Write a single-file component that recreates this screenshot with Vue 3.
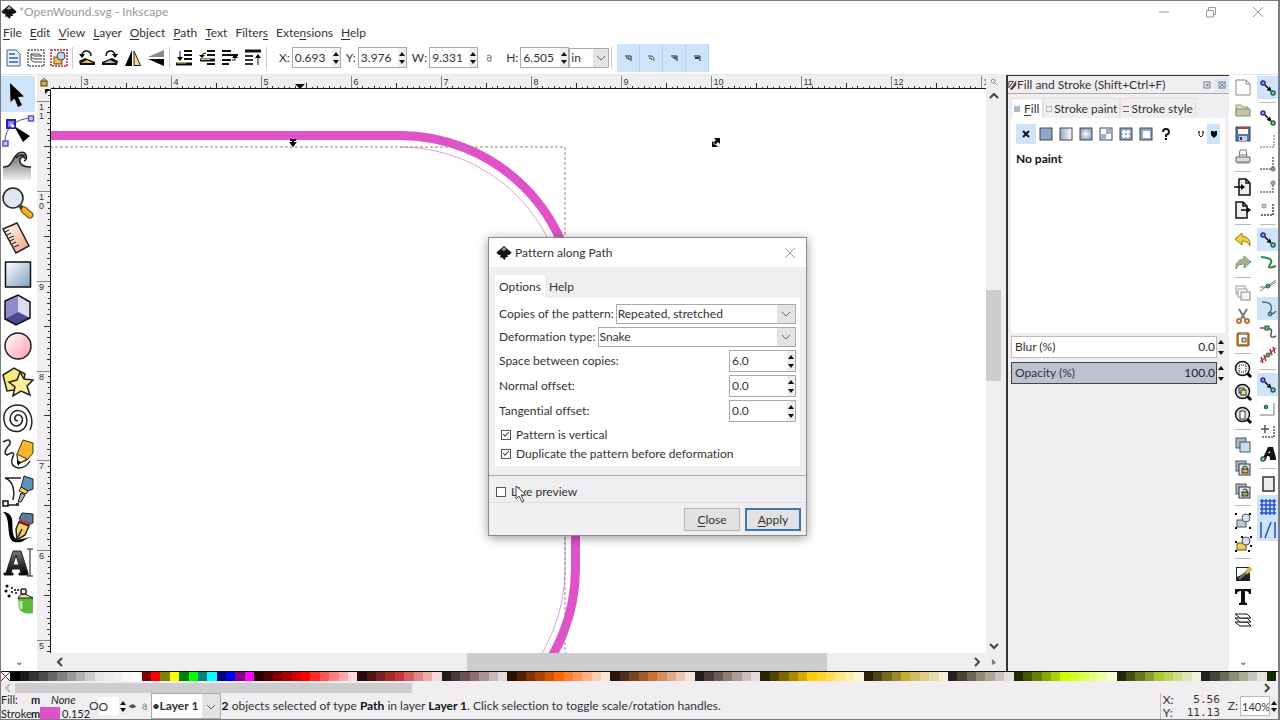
<template>
  <div class="window">
    <svg class="defs" width="0" height="0" aria-hidden="true">
      <defs>
        <linearGradient id="gBlue" x1="0" y1="0" x2="1" y2="1"><stop offset="0" stop-color="#fff" /><stop offset="1" stop-color="#7f9fc6" /></linearGradient>
        <linearGradient id="gPink" x1="0" y1="0" x2="1" y2="1"><stop offset="0" stop-color="#fff" /><stop offset="1" stop-color="#ff9cab" /></linearGradient>
        <linearGradient id="gRuler" x1="0" y1="0" x2="1" y2="1"><stop offset="0" stop-color="#fff" /><stop offset="1" stop-color="#f0a080" /></linearGradient>
        <linearGradient id="gWave" x1="0" y1="0" x2="0" y2="1"><stop offset="0" stop-color="#666" /><stop offset="1" stop-color="#eee" /></linearGradient>
        <linearGradient id="gFade"><stop offset="0" stop-color="#8fa6c6" /><stop offset="1" stop-color="#fff" /></linearGradient>
        <radialGradient id="gRadial"><stop offset="0" stop-color="#fff" /><stop offset="1" stop-color="#8fa6c6" /></radialGradient>
        <linearGradient id="gInk" x1="0" y1="0" x2="0" y2="1"><stop offset="0" stop-color="#777" /><stop offset="1" stop-color="#000" /></linearGradient>
      </defs>
      <symbol id="logo" viewBox="0 0 16 16">
        <path d="M8 1 L15 7 Q16 8 14.500 9 L11 10.500 L12.500 12 L10 12 L8.500 15 L6 12.500 L3.500 12.500 L5 10.800 L1.500 9 Q0 8 1 7 Z" fill="#111" />
        <path d="M8 2 L11 5 L9 4.800 L8 6 L6.500 5 L5 5.500 Z" fill="#aaa" />
      </symbol>

      <!-- toolbox -->
      <symbol id="t-select" viewBox="0 0 34 34"><path d="M9 6 L23 19.500 L17 20 L21 28 L17 30 L13.500 21.500 L9.500 25 Z" /></symbol>
      <symbol id="t-node" viewBox="0 0 34 34">
        <path d="M4 30 Q4 7 30 5" fill="none" stroke="#555" />
        <path d="M13 13 L29 23 L22 29 Z" />
        <rect x="6" y="7" width="8" height="8" fill="#7f7fee" stroke="#2222b5" stroke-width="2" />
        <path d="M9 10 L14 13 L11 15 Z" fill="#fff" />
        <rect x="27.500" y="3" width="5" height="5" fill="#c6c6ff" stroke="#5b55c8" stroke-width="1.500" />
        <rect x="2" y="28" width="5" height="5" fill="#c6c6ff" stroke="#5b55c8" stroke-width="1.500" />
      </symbol>
      <symbol id="t-tweak" viewBox="0 0 34 34">
        <path d="M2 18 C12 19 11 7 18 5 C25 2 29 10 24 13 C25 8 19 8 19 12 C18 17 25 18 30 18 V31 H2 Z" fill="url(#gWave)" />
        <path d="M2 18 C12 19 11 7 18 5 C25 2 29 10 24 13 C25 8 19 8 19 12 C18 17 25 18 30 18 L30 15 Q27 15 26 12 V3 H11 V12 L2 15 Z" fill="#fff" />
        <path d="M2 18 C12 19 11 7 18 4 C25 1 28 10 23 12 M24 9 C22 6 18 9 19 13 C20 17 25 18 30 18 M15 9 C18 5 22 6 23 7" fill="none" stroke="#222" stroke-width="1.500" />
      </symbol>
      <symbol id="t-zoom" viewBox="0 0 34 34">
        <path d="M19 21 L23 25" stroke="#444" stroke-width="4" />
        <path d="M23 25 L29 30" stroke="#6b4400" stroke-width="7" stroke-linecap="round" />
        <path d="M23 25 L29 30" stroke="#f4b022" stroke-width="5" stroke-linecap="round" />
        <circle cx="12" cy="13" r="10" fill="#dfe6f4" stroke="#222" stroke-width="1.500" />
      </symbol>
      <symbol id="t-measure" viewBox="0 0 34 34">
        <path d="M2 8 L16 2 L28 25 L15 32 Z" fill="url(#gRuler)" stroke="#222" stroke-width="1.500" />
        <path d="M4 11 L8 9 M6 14 L10 12 M8 17 L13 15 M9 20 L13 18 M11 23 L15 21 M13 26 L18 24" stroke="#111" />
      </symbol>
      <symbol id="t-rect" viewBox="0 0 34 34"><rect x="4.500" y="5" width="25" height="25" fill="url(#gBlue)" stroke="#111" stroke-width="1.500" /></symbol>
      <symbol id="t-box" viewBox="0 0 34 34">
        <path d="M4 8 L17 2 L29 9 V25 L15 32 L4 26 Z" fill="#a8a8dc" />
        <path d="M4 8 L17 2 V19 L4 26 Z" fill="#8d8dcc" />
        <path d="M17 2 L29 9 V25 L17 19 Z" fill="#dcdcf4" />
        <path d="M4 26 L17 19 L29 25 L15 32 Z" fill="#4a4a98" />
        <path d="M4 8 L17 2 L29 9 V25 L15 32 L4 26 Z" fill="none" stroke="#111" stroke-width="1.500" />
      </symbol>
      <symbol id="t-circle" viewBox="0 0 34 34"><circle cx="17" cy="17" r="13" fill="url(#gPink)" stroke="#222" stroke-width="1.500" /></symbol>
      <symbol id="t-star" viewBox="0 0 34 34">
        <path d="M2 10 L13 3 L24 9 L21 24 L6 26 Z" fill="#f8ea7b" stroke="#222" stroke-width="1.500" />
        <path d="M19 7 L23 14 L32 15 L26 21 L29 30 L20 26 L12 31 L14 22 L8 17 L16 15 Z" fill="#fff19a" stroke="#222" stroke-width="1.500" />
      </symbol>
      <symbol id="t-spiral" viewBox="0 0 34 34">
        <path d="M29 29 C34 18 28 4 17 4 C7 4 2 11 3 19 C4 28 12 32 19 30 C26 27 27 20 25 15 C22 8 13 8 10 14 C7 21 12 25 16 25 C21 24 23 18 20 15 C17 12 13 15 14 19 L17 20" fill="none" stroke="#222" stroke-width="1.500" />
      </symbol>
      <symbol id="t-pencil" viewBox="0 0 34 34">
        <path d="M2 5 Q10 0 9 7 Q1 16 6 18 Q16 12 11 22 Q9 29 17 31 Q25 31 29 24" fill="none" stroke="#222" stroke-width="1.500" />
        <path d="M22 3 L32 6 V16 L26 23 L17 27 L16 17 Z" fill="#f8b52f" stroke="#4b2c00" />
        <path d="M16 17 L26 22 L17 27 Z" fill="#fff1bd" stroke="#333" />
        <path d="M16 23 L20 25 L17 29 Z" />
      </symbol>
      <symbol id="t-pen" viewBox="0 0 34 34">
        <path d="M4 5 H20 M4 5 C13 8 14 20 12 27 M5 32 H18" fill="none" stroke="#222" stroke-width="1.500" />
        <path d="M23 3 L32 6 V16 L27 18 L20 14 Z" fill="#5b93bd" stroke="#222" />
        <path d="M20 14 L27 18 L25 21 L18 18 Z" fill="#f2d54b" stroke="#222" />
        <path d="M20 20 L24 22 L20 29 H17 Z" fill="#9bb" stroke="#111" />
        <rect x="2" y="28" width="5" height="5" fill="#eee" stroke="#111" stroke-width="1.500" />
        <rect x="15" y="30" width="3" height="3" fill="#333" />
      </symbol>
      <symbol id="t-calligraphy" viewBox="0 0 34 34">
        <path d="M2 3 C17 4 8 20 14 29 C19 33 25 27 32 29 C24 27 24 35 13 33 C4 29 11 10 2 3 Z" />
        <path d="M21 4 L32 5 V14 L27 16 L18 10 Z" fill="#537ca6" stroke="#222" />
        <path d="M18 10 L29 13 L28 17 L18 13 Z" fill="#c53c2c" />
        <path d="M18 13 L28 17 L24 26 L16 31 L15 20 Z" fill="#f6d365" stroke="#222" stroke-width="1.500" />
        <path d="M16 30 L21 20" stroke="#222" stroke-width="1.500" />
      </symbol>
      <symbol id="t-text" viewBox="0 0 34 34">
        <path fill-rule="evenodd" d="M3 30 V28 H5 L12 6 H20 L27 28 V30 H18 V28 H20 L19 24 H11 L10 28 H12 V30 Z M12 20 H18 L15 10 Z" fill="url(#gInk)" stroke="#222" />
        <path d="M26 4 H32 M29 4 V31 M26 31 H32" stroke="#111" />
      </symbol>
      <symbol id="t-spray" viewBox="0 0 34 34">
        <path d="M17 17 Q18 13 24 14 L32 16 V32 Q23 34 18 28 Z" fill="#5fb93a" />
        <path d="M17 18 Q18 13 24 13 L32 17 H18 Z" fill="#efe2a0" stroke="#222" />
        <rect x="20" y="8" width="5" height="5" rx="1" fill="#eee" stroke="#222" stroke-width="1.500" />
        <path d="M20 20 V28" stroke="#bdf09a" stroke-width="3" />
        <g><circle cx="6" cy="5" r="1.500" /><circle cx="5" cy="10" r="1.500" /><circle cx="8" cy="15" r="1.500" /><circle cx="11" cy="7" r="1" /><circle cx="11" cy="11" r="1" /><circle cx="14" cy="9" r="1" /><circle cx="15" cy="12" r="1" /><circle cx="17" cy="9" r="1" /></g>
      </symbol>

      <!-- tool controls -->
      <symbol id="c-all" viewBox="0 0 20 20"><path d="M4 2 H13 L17 6 V18 H4 Z" fill="#eaf1fa" stroke="#3c5f8d" /><path d="M6 6 H12 M6 10 H15 M6 14 H15" stroke="#5c86bd" stroke-width="2" /></symbol>
      <symbol id="c-layers" viewBox="0 0 20 20"><rect x="2" y="2" width="16" height="16" fill="none" stroke="#111" stroke-dasharray="2 1" /><path d="M5 6 H13 L16 8 H8 Z M5 9 L8 11 H16 M5 12 L8 14 H16 M5 6 V12" fill="#fff" stroke="#444" /></symbol>
      <symbol id="c-deselect" viewBox="0 0 20 20"><rect x="2" y="2" width="16" height="16" fill="none" stroke="#c5202b" stroke-width="1.500" stroke-dasharray="2 1" /><rect x="5" y="9" width="8" height="7" fill="#f0bd46" stroke="#6b4a10" /><circle cx="12" cy="8" r="4" fill="#c6d4ee" stroke="#345" /></symbol>
      <symbol id="c-ccw" viewBox="0 0 20 20"><path d="M8 10 L18 14 V17 H3 L2 13 Z" fill="#111" /><path d="M4 15 L10 12 L16 15 Z" fill="#e6bf4d" /><path d="M5 7 C6 1 14 2 14 8" fill="none" stroke="#111" stroke-width="1.500" /><path d="M2 6 H8 L5 10 Z" /></symbol>
      <symbol id="c-cw" viewBox="0 0 20 20"><path d="M12 10 L2 14 V17 H17 L18 13 Z" fill="#111" /><path d="M4 15 L10 12 L16 15 Z" fill="#a6b9d6" /><path d="M6 8 C6 2 14 1 15 7" fill="none" stroke="#111" stroke-width="1.500" /><path d="M12 6 H18 L15 10 Z" /></symbol>
      <symbol id="c-fliph" viewBox="0 0 20 20"><path d="M9 2 V18 H2 Z" /><path d="M11 3 V17.500 H17.500 Z" fill="#f2dc83" stroke="#222" /></symbol>
      <symbol id="c-flipv" viewBox="0 0 20 20"><path d="M18 2 V9 H2 Z" fill="#888" /><path d="M18 18 V11 H2 Z" /></symbol>
      <symbol id="c-bottom" viewBox="0 0 20 20"><path d="M10 3 H18 M10 7 H18 M10 11 H18" stroke="#111" stroke-width="2" /><path d="M2 16 H18" stroke="#111" stroke-width="3" /><path d="M3 15 H12" stroke="#e0bd52" /><path d="M6 3 V12" stroke="#111" /><path d="M3 9 H9 L6 13 Z" /></symbol>
      <symbol id="c-lower" viewBox="0 0 20 20"><path d="M10 3 H18 M10 7 H18 M10 16 H18" stroke="#111" stroke-width="2" /><path d="M3 12 H18" stroke="#111" stroke-width="3" /><path d="M4 11.500 H13" stroke="#e0bd52" /><path d="M9 5 Q5 5 5 8" fill="none" stroke="#111" /><path d="M2 7 H8 L5 10 Z" /></symbol>
      <symbol id="c-raise" viewBox="0 0 20 20"><path d="M2 3 H11 M2 7 H18 M2 12 H11 M2 16 H9" stroke="#111" stroke-width="2" /><path d="M12 12 H15 V9" fill="none" stroke="#111" /><path d="M12 10 H18 L15 6 Z" /></symbol>
      <symbol id="c-top" viewBox="0 0 20 20"><path d="M2 3 H18" stroke="#111" stroke-width="3" /><path d="M2 8 H10 M2 12 H10 M2 16 H10" stroke="#333" stroke-width="2" /><path d="M15 7 V17" stroke="#111" /><path d="M12 10 H18 L15 6 Z" /></symbol>
      <symbol id="c-scale" viewBox="0 0 12 12"><path d="M3 4 H9 V9 M4 6 H7 V8" fill="none" stroke="#222" /></symbol>
      <symbol id="c-corner" viewBox="0 0 12 12"><path d="M3 4 H6 Q9 4 9 9 M4 6 Q7 6 7 8" fill="none" stroke="#444" /></symbol>
      <symbol id="c-grad" viewBox="0 0 12 12"><path d="M3 4 H9 V9" fill="none" stroke="#222" /><path d="M4 5 H8 V8 Z" fill="#445" /></symbol>
      <symbol id="c-patt" viewBox="0 0 12 12"><path d="M3 4 H9 V9" fill="none" stroke="#222" /><rect x="4" y="5" width="4" height="2" fill="#334" /></symbol>
      <symbol id="lock" viewBox="0 0 10 10"><path d="M3 5 V3 Q5 0 7 3 V5" fill="none" stroke="#555" /><rect x="2" y="4" width="6" height="5" fill="#d8b13c" stroke="#4b3a08" /></symbol>
      <symbol id="open" viewBox="0 0 10 10"><path d="M3 3 Q5 1 7 3 V5 M3 5 Q5 4 7 5 V8 H4 Q2 6 4 5" fill="none" stroke="#777" /></symbol>

      <!-- commands bar -->
      <symbol id="m-new" viewBox="0 0 20 20"><path d="M3 2 H13 L17 6 V17 H3 Z M13 2 V6 H17" fill="#fff" stroke="#888" /></symbol>
      <symbol id="m-open" viewBox="0 0 20 20"><path d="M3 14 V4 H8 L10 6 H15 V8" fill="#dde2c4" stroke="#8c9079" /><path d="M3 15 V8 H17 V15 Z" fill="#bec8a3" stroke="#858b6e" /></symbol>
      <symbol id="m-save" viewBox="0 0 20 20"><rect x="3" y="3" width="14" height="14" fill="#5677a8" stroke="#27456f" /><rect x="5" y="3" width="10" height="7" fill="#fff" /><path d="M5 4 H15" stroke="#c93434" stroke-width="2" /><rect x="6" y="12" width="8" height="5" fill="#ccd" /><rect x="7" y="13" width="2" height="3" fill="#334" /></symbol>
      <symbol id="m-print" viewBox="0 0 20 20"><path d="M6 10 L7 3 H13 L14 10" fill="#fff" stroke="#777" /><path d="M3 10 H17 V15 H3 Z" fill="#ddd" stroke="#666" /><path d="M4 16 H16 M6 8 H14" stroke="#777" /></symbol>
      <symbol id="m-import" viewBox="0 0 20 20"><path d="M6 2 H13 L17 6 V18 H6 Z M13 2 V6 H17" fill="#eee" stroke="#111" stroke-width="1.500" /><path d="M1 10 H9" stroke="#000" stroke-width="1.500" /><path d="M8 7 L12 10 L8 13 Z" /></symbol>
      <symbol id="m-export" viewBox="0 0 20 20"><path d="M3 2 H10 L14 6 V18 H3 Z M10 2 V6 H14" fill="#eee" stroke="#111" stroke-width="1.500" /><path d="M8 10 H15" stroke="#000" stroke-width="1.500" /><path d="M14 7 L18 10 L14 13 Z" /></symbol>
      <symbol id="m-undo" viewBox="0 0 20 20"><path d="M2 9 L9 3 V6 Q18 7 17 16 Q15 11 9 11 V15 Z" fill="#f0cf32" stroke="#9c7a0c" /></symbol>
      <symbol id="m-redo" viewBox="0 0 20 20"><path d="M18 9 L11 3 V6 Q2 7 3 16 Q5 11 11 11 V15 Z" fill="#9fb58c" stroke="#66795a" stroke-dasharray="2 1" /></symbol>
      <symbol id="m-dup" viewBox="0 0 20 20"><rect x="3" y="3" width="9" height="8" fill="#fff" stroke="#999" /><rect x="5" y="6" width="9" height="8" fill="#fff" stroke="#999" /><rect x="8" y="9" width="9" height="8" fill="#f4f4f4" stroke="#888" /></symbol>
      <symbol id="m-cut" viewBox="0 0 20 20"><path d="M6 3 L12 13 M14 3 L8 13" stroke="#777" stroke-width="2" /><circle cx="6" cy="15" r="2" fill="none" stroke="#b8792d" stroke-width="2" /><circle cx="14" cy="15" r="2" fill="none" stroke="#b8792d" stroke-width="2" /></symbol>
      <symbol id="m-paste" viewBox="0 0 20 20"><rect x="4" y="4" width="12" height="13" rx="1" fill="#c0842f" stroke="#7c5316" /><rect x="6" y="6" width="8" height="9" fill="#fff" /><rect x="7" y="3" width="6" height="3" fill="#999" /><path d="M9 9 H13 V13 H9 Z" fill="#ccd" stroke="#556" /></symbol>
      <symbol id="m-zsel" viewBox="0 0 20 20"><path d="M14 14 L18 18" stroke="#000" stroke-width="3" /><circle cx="9.500" cy="9.500" r="7" fill="#f4f7fa" stroke="#111" stroke-width="1.500" /><rect x="6" y="6" width="7" height="7" fill="none" stroke="#111" stroke-dasharray="1 1" /></symbol>
      <symbol id="m-zdraw" viewBox="0 0 20 20"><path d="M14 14 L18 18" stroke="#000" stroke-width="3" /><circle cx="9.500" cy="9.500" r="7" fill="#dbe5ee" stroke="#111" stroke-width="1.500" /><rect x="6" y="6" width="5" height="5" fill="#efe28d" stroke="#333" /><rect x="8" y="8" width="5" height="5" fill="#efe28d" stroke="#333" /></symbol>
      <symbol id="m-zpage" viewBox="0 0 20 20"><path d="M14 14 L18 18" stroke="#000" stroke-width="3" /><circle cx="9.500" cy="9.500" r="7" fill="#dbe5ee" stroke="#111" stroke-width="1.500" /><rect x="7" y="6" width="5" height="8" fill="#fff" stroke="#333" /></symbol>
      <symbol id="m-copy" viewBox="0 0 20 20"><rect x="3" y="3" width="10" height="10" fill="#a9b9c6" stroke="#4b5661" /><rect x="7" y="7" width="10" height="10" fill="#cbdcf0" stroke="#4b5661" /></symbol>
      <symbol id="m-clone" viewBox="0 0 20 20"><rect x="3" y="3" width="10" height="10" fill="#a9b9c6" stroke="#4b5661" /><rect x="6" y="6" width="11" height="11" fill="#dde6ea" stroke="#333" /><rect x="9" y="11" width="6" height="4" fill="#e2bd3b" stroke="#222" /><path d="M10 11 V9 Q12 7 14 9 V11" fill="none" stroke="#222" /></symbol>
      <symbol id="m-unclone" viewBox="0 0 20 20"><rect x="3" y="3" width="10" height="10" fill="#a9b9c6" stroke="#4b5661" /><rect x="6" y="6" width="11" height="11" fill="#dde6ea" stroke="#333" /><rect x="9" y="11" width="6" height="4" fill="#86b55e" stroke="#222" /><path d="M10 9 Q12 7 14 9 V11" fill="none" stroke="#222" /></symbol>
      <symbol id="m-group" viewBox="0 0 20 20"><path d="M2 2 h2 v2 h-2 Z M16 2 h2 v2 h-2 Z M2 16 h2 v2 h-2 Z M16 16 h2 v2 h-2 Z" /><rect x="4" y="9" width="9" height="7" fill="#bccbd8" stroke="#4b5661" /><circle cx="13" cy="7" r="4" fill="#d4e0ee" stroke="#4b5661" /></symbol>
      <symbol id="m-ungroup" viewBox="0 0 20 20"><path d="M2 7 h2 v2 h-2 Z M8 2 h2 v2 h-2 Z M17 2 h2 v2 h-2 Z M2 16 h2 v2 h-2 Z M15 16 h2 v2 h-2 Z M17 11 h2 v2 h-2 Z" /><rect x="4" y="9" width="9" height="7" fill="#f3cc57" stroke="#6a4b0b" /><circle cx="13" cy="7" r="4" fill="#d4e0ee" stroke="#4b5661" /></symbol>
      <symbol id="m-fill" viewBox="0 0 20 20"><rect x="3" y="3" width="14" height="14" fill="#222" /><path d="M4 4 H15 Q12 10 4 13 Z" fill="#fff" /><path d="M13 9 L18 4" stroke="#d7b73f" stroke-width="4" /><path d="M6 15 L13 9" stroke="#777" stroke-width="2" /></symbol>
      <symbol id="brush" viewBox="0 0 10 12"><path d="M1 2 H6 L1 9 Z" fill="#fff" stroke="#333" /><path d="M2 11 L9 1 V6 L5 11 Z" fill="#2b2420" /><path d="M4 9 L8 4" stroke="#c98a3c" /></symbol>
      <symbol id="m-text" viewBox="0 0 20 20"><path d="M2 2 H18 V7 H16 Q16 4 12 4 V15 Q12 16 14 16 V18 H6 V16 Q8 16 8 15 V4 Q4 4 4 7 H2 Z" fill="#111" /></symbol>
      <symbol id="m-layers" viewBox="0 0 20 20"><path d="M2 12 H14 L18 16 H7 Z" fill="#fff" stroke="#111" /><path d="M2 8 H14 L18 12 H7 Z" fill="#fff" stroke="#111" /><path d="M2 4 H14 L18 8 H7 Z" fill="#fff" stroke="#111" /></symbol>

      <!-- snap bar -->
      <symbol id="s-snap" viewBox="0 0 20 20"><circle cx="5" cy="5" r="2" fill="#9a9aff" stroke="#2b2ba8" stroke-width="1.500" /><circle cx="15" cy="15" r="2" fill="#8fc8a8" stroke="#1d6b40" stroke-width="1.500" /><path d="M7 7 L10 10" stroke="#000" stroke-width="1.500" /><path d="M13.500 13.500 L8.500 12 L12 8.500 Z" /></symbol>
      <symbol id="s-bbox" viewBox="0 0 20 20"><path d="M2 16 H17 M16 4 V16" fill="none" stroke="#999" stroke-width="1.500" stroke-dasharray="2 1" /></symbol>
      <symbol id="s-bcorner" viewBox="0 0 20 20"><path d="M2 15 H17 M15 3 V15" fill="none" stroke="#666" stroke-width="1.500" stroke-dasharray="2 1" /><circle cx="15" cy="15" r="2" fill="#999" stroke="#666" /></symbol>
      <symbol id="s-bmid" viewBox="0 0 20 20"><path d="M2 15 H15 V5" fill="none" stroke="#777" stroke-width="1.500" stroke-dasharray="2 1" /><circle cx="15" cy="6" r="2" fill="#aaa" stroke="#777" /></symbol>
      <symbol id="s-bcenter" viewBox="0 0 20 20"><path d="M3 15 H15 V4" fill="none" stroke="#444" stroke-width="1.500" stroke-dasharray="2 1" /><circle cx="6" cy="6" r="2" fill="#ccc" stroke="#888" /></symbol>
      <symbol id="s-path" viewBox="0 0 20 20"><path d="M3 4 C15 5 15 8 11 13 Q10 16 18 13" fill="none" stroke="#2b8a43" stroke-width="2" /></symbol>
      <symbol id="s-inter" viewBox="0 0 20 20"><path d="M2 15 L18 4 M2 11 H10 L18 6" fill="none" stroke="#777" /><circle cx="10" cy="10" r="2" fill="#5c967d" stroke="#366" /></symbol>
      <symbol id="s-cusp" viewBox="0 0 20 20"><path d="M4 3 C13 3 15 6 12 14 Q15 16 18 12" fill="none" stroke="#668" stroke-width="1.500" /><circle cx="12" cy="15" r="2" fill="#71a78b" stroke="#296347" /></symbol>
      <symbol id="s-smooth" viewBox="0 0 20 20"><path d="M2 6 H9 Q15 6 13 12 Q12 17 18 14" fill="none" stroke="#555" stroke-width="1.500" /><rect x="7" y="4" width="4" height="4" fill="#6faf86" stroke="#1d6b40" /></symbol>
      <symbol id="s-mid" viewBox="0 0 20 20"><path d="M2 17 L18 3" stroke="#777" stroke-width="1.500" /><path d="M3 12 L5 18 M6 10 L8 16 M12 4 L14 10 M15 2 L17 8" stroke="#c6202b" stroke-width="1.500" /><circle cx="10" cy="10" r="2" fill="#61ab79" stroke="#1d6b40" /></symbol>
      <symbol id="s-object" viewBox="0 0 20 20"><path d="M2 17 H16 V5" fill="none" stroke="#777" /><circle cx="8" cy="9" r="1.500" fill="#9c9" stroke="#286643" stroke-width="1.500" /></symbol>
      <symbol id="s-rot" viewBox="0 0 20 20"><path d="M4 16 H16 V4" fill="none" stroke="#555" stroke-width="1.500" stroke-dasharray="2 1" /><path d="M3 8 H11 M7 4 V12" stroke="#555" stroke-width="1.500" /></symbol>
      <symbol id="s-text" viewBox="0 0 20 20"><path fill-rule="evenodd" d="M4 16 L10 3 H15 L18 14 V16 H12 V14 L11 12 H9 L8 16 Z M10 9 H12 L12 7 Z" fill="#111" /><circle cx="5" cy="15" r="2" fill="#9c9" stroke="#286643" stroke-width="1.500" /></symbol>
      <symbol id="s-page" viewBox="0 0 20 20"><rect x="5" y="3" width="11" height="14" fill="#ececec" stroke="#333" stroke-width="1.500" /></symbol>
      <symbol id="s-grid" viewBox="0 0 20 20"><path d="M2 4 H18 M2 8 H18 M2 12 H18 M2 16 H18 M4 2 V18 M8 2 V18 M12 2 V18 M16 2 V18" stroke="#2d4fcf" stroke-width="1.500" /></symbol>
      <symbol id="s-guide" viewBox="0 0 20 20"><path d="M3 2 V18 M7 18 L13 2 M17 2 V18" stroke="#2d4fcf" stroke-width="1.500" /></symbol>

      <!-- paint kinds -->
      <symbol id="p-none" viewBox="0 0 14 14"><path d="M4 4 L10 10 M10 4 L4 10" stroke="#111" stroke-width="2" /></symbol>
      <symbol id="p-flat" viewBox="0 0 14 14"><rect x="1" y="1" width="12" height="12" fill="#8fa6c6" stroke="#445" /></symbol>
      <symbol id="p-linear" viewBox="0 0 14 14"><rect x="1" y="1" width="12" height="12" fill="url(#gFade)" stroke="#445" /></symbol>
      <symbol id="p-radial" viewBox="0 0 14 14"><rect x="1" y="1" width="12" height="12" fill="url(#gRadial)" stroke="#445" /></symbol>
      <symbol id="p-pattern" viewBox="0 0 14 14"><rect x="1" y="1" width="12" height="12" fill="#fff" stroke="#445" /><path d="M7 2 H12 V7 H7 Z M2 7 H7 V12 H2 Z" fill="#9fb2cc" /></symbol>
      <symbol id="p-swatch" viewBox="0 0 14 14"><rect x="1" y="1" width="12" height="12" fill="#8fa6c6" stroke="#445" /><path d="M3 5 H11 M3 9 H11 M5 3 V11 M9 3 V11" stroke="#fff" stroke-width="2" /></symbol>
      <symbol id="p-unset" viewBox="0 0 14 14"><rect x="1" y="1" width="12" height="12" fill="#8fa6c6" stroke="#445" /><rect x="4" y="4" width="7" height="7" fill="#fff" /></symbol>
      <symbol id="p-unknown" viewBox="0 0 14 14"><path d="M4 5 Q4 2 7 2 Q10 2 10 5 Q10 7 7 8 V10" fill="none" stroke="#111" stroke-width="2" /><rect x="6" y="11" width="2" height="2" /></symbol>
    </svg>

    <header class="titlebar">
      <svg class="logo"><use href="#logo" /></svg>
      <span class="title">*OpenWound.svg - Inkscape</span>
      <div class="window-buttons">
        <button aria-label="Minimize"><svg viewBox="0 0 12 12"><path d="M1 6 H11" /></svg></button>
        <button aria-label="Restore"><svg viewBox="0 0 12 12"><path d="M1.500 4.500 H8.500 V11 H1.500 Z M3.500 4 V1.500 H10.500 V8.500 H9" /></svg></button>
        <button aria-label="Close"><svg viewBox="0 0 12 12"><path d="M1 1 L11 11 M11 1 L1 11" /></svg></button>
      </div>
    </header>

    <nav class="menubar">
      <button v-for="m in menus" :key="m.join('')">{{ m[0] }}<u>{{ m[1] }}</u>{{ m[2] }}</button>
    </nav>

    <div class="controls">
      <template v-for="(group, i) in controlGroups" :key="i">
        <button v-for="c in group" :key="c" class="control" :aria-label="c"><svg><use :href="'#c-' + c" /></svg></button>
        <span class="vsep"></span>
      </template>
      <div class="fields">
        <template v-for="f in fields" :key="f.label">
          <button v-if="f.label === 'H:'" class="ratio" aria-label="Lock ratio"><svg><use href="#open" /></svg></button>
          <label :for="'f' + f.label">{{ f.label }}</label>
          <div class="spin">
            <input :id="'f' + f.label" v-model="f.value" type="text">
            <span class="steps"><button aria-label="Increase"></button><button aria-label="Decrease"></button></span>
          </div>
        </template>
      </div>
      <div class="combo unit">
        <select aria-label="Unit"><option>in</option></select>
        <svg viewBox="0 0 10 10"><path d="M1 3 L5 7 L9 3" /></svg>
      </div>
      <span class="vsep"></span>
      <div class="affects">
        <button v-for="a in ['scale', 'corner', 'grad', 'patt']" :key="a" :aria-label="a"><svg><use :href="'#c-' + a" /></svg></button>
      </div>
    </div>

    <main class="main">
      <aside class="toolbox">
        <button v-for="t in tools" :key="t" :class="{ active: t === tool }" :aria-label="t" @click="tool = t">
          <svg><use :href="'#t-' + t" /></svg>
        </button>
        <span class="more">⌄</span>
      </aside>

      <section class="editor">
        <div class="corner"><svg><use href="#lock" /></svg></div>
        <svg class="ruler-x">
          <path v-for="t in xTicks" :key="t.at" :d="`M${t.at} 14 v${-t.len}`" :class="{ major: t.label }" />
          <text v-for="t in xTicks.filter(t => t.label)" :key="t.label" :x="t.at + 2" y="10">{{ t.label }}</text>
          <path class="marker" d="M244 9 h10 l-5 5 Z" />
        </svg>
        <button class="arrow" aria-label="Zoom with window"><svg viewBox="0 0 10 10"><circle cx="4" cy="4" r="2.500" /><path d="M6 6 L9 9" /></svg></button>
        <svg class="ruler-y">
          <path v-for="t in yTicks" :key="t.at" :d="`M13 ${t.at} h${-t.len}`" :class="{ major: t.label }" />
          <template v-for="t in yTicks.filter(t => t.label)" :key="t.label">
            <text v-for="(d, i) in t.label" :key="i" x="2" :y="t.at + 8 + i * 9">{{ d }}</text>
          </template>
          <path class="marker" d="M8 0 v5 l5 -5 Z" />
        </svg>
        <svg class="canvas">
          <g transform="translate(-51 -89)">
            <path class="wound" d="M40 135.500 H400 A175.500 175.500 0 0 1 575.500 311 V569 A175.500 175.500 0 0 1 400 744" />
            <path class="guide" d="M400 147 A165 165 0 0 1 565 311 V569 A165 165 0 0 1 400 734" />
            <path class="bbox" d="M40 147 H565 V744" />
            <path d="M290 139 H296 V141 H294 V142 H297 L293 147 L289 142 H292 V141 H290 Z" />
            <path d="M714 138 H720 V144 Z M712 141 V147 H718 Z M713 143 L717 139 L719 141 L715 145 Z" />
          </g>
        </svg>
        <div class="vscroll">
          <button aria-label="Scroll up"><svg viewBox="0 0 10 10"><path d="M1 7 L5 3 L9 7" /></svg></button>
          <div class="track"><div class="thumb"></div></div>
          <button aria-label="Scroll down"><svg viewBox="0 0 10 10"><path d="M1 3 L5 7 L9 3" /></svg></button>
        </div>
        <div class="hscroll">
          <button aria-label="Scroll left"><svg viewBox="0 0 10 10"><path d="M7 1 L3 5 L7 9" /></svg></button>
          <div class="track"><div class="thumb"></div></div>
          <button aria-label="Scroll right"><svg viewBox="0 0 10 10"><path d="M3 1 L7 5 L3 9" /></svg></button>
        </div>
        <button class="arrow cms" aria-label="Color management"><svg viewBox="0 0 10 10"><path d="M3 2 L7 6 L3 8 Z" /></svg></button>
      </section>

      <aside class="dock">
        <div class="dock-head">
          <svg class="fill-icon"><use href="#brush" /></svg>
          <span>Fill and Stroke (Shift+Ctrl+F)</span>
          <button aria-label="Iconify"><svg viewBox="0 0 8 8"><rect x="1" y="1" width="6" height="6" /><path d="M5 3 L3 4 L5 5 Z" /></svg></button>
          <button class="lit" aria-label="Close dock"><svg viewBox="0 0 8 8"><rect x="1" y="1" width="6" height="6" /><path d="M2 2 L6 6 M6 2 L2 6" /></svg></button>
        </div>
        <div class="dock-tabs">
          <button class="on"><i class="ico-fill"></i><span><u>F</u>ill</span></button>
          <button><i class="ico-paint"></i>Stroke paint</button>
          <button><i class="ico-style"></i>Stroke style</button>
        </div>
        <div class="dock-page">
          <div class="paints">
            <button v-for="p in paints" :key="p" :class="{ active: p === 'none' }" :aria-label="p"><svg><use :href="'#p-' + p" /></svg></button>
            <span class="grow"></span>
            <button class="rule" aria-label="Even-odd"><svg viewBox="0 0 12 14"><path d="M4 4 V8 L6 10 L8 8 V4 M3 5 H5 M7 5 H9" fill="none" stroke="#222" /></svg></button>
            <button class="rule active" aria-label="Nonzero"><svg viewBox="0 0 12 14"><path d="M3 4 H5 L6 5 L7 4 H9 V8 L6 11 L3 8 Z" /></svg></button>
          </div>
          <b>No paint</b>
        </div>
        <div v-for="s in sliders" :key="s.name" class="slider" :class="{ full: s.full }">
          <div class="bar">
            <label :for="s.name">{{ s.name }} (%)</label>
            <input :id="s.name" v-model="s.value" type="text">
          </div>
          <span class="steps"><button aria-label="Increase"></button><button aria-label="Decrease"></button></span>
        </div>
      </aside>

      <aside class="iconbar commands">
        <template v-for="(group, i) in commands" :key="i">
          <hr v-if="i">
          <button v-for="c in group" :key="c" :aria-label="c"><svg><use :href="'#m-' + c" /></svg></button>
        </template>
        <span class="more">⌄</span>
      </aside>
      <aside class="iconbar snaps">
        <template v-for="(group, i) in snaps" :key="i">
          <hr v-if="i">
          <button v-for="(s, j) in group" :key="j" :class="{ active: s.on }" :aria-label="s.icon"><svg><use :href="'#s-' + s.icon" /></svg></button>
        </template>
      </aside>
    </main>

    <div class="palette">
      <button class="nocolor" aria-label="None"><svg viewBox="0 0 9 9"><path d="M0 0 L9 9 M9 0 L0 9" /></svg></button>
      <button v-for="(c, i) in swatches" :key="i" :style="{ background: '#' + c }" :aria-label="'#' + c"></button>
    </div>
    <div class="palette-scroll">
      <button aria-label="Palette left"><svg viewBox="0 0 10 10"><path d="M7 1 L3 5 L7 9" /></svg></button>
      <div class="track"><div class="thumb"></div></div>
      <button aria-label="Palette right"><svg viewBox="0 0 10 10"><path d="M3 1 L7 5 L3 9" /></svg></button>
    </div>

    <footer class="status">
      <div class="style-grid">
        <span>Fill:</span><b>m</b><i>None</i>
        <span>Stroke</span><b>m</b><span class="stroke-value"><span class="chip"></span>0.152</span>
      </div>
      <div class="opacity">
        <label for="op">O</label>
        <input id="op" type="text" value="O">
        <span class="steps"><button aria-label="Increase"></button><button aria-label="Decrease"></button></span>
      </div>
      <button class="eye" aria-label="Layer visibility"><svg viewBox="0 0 10 10"><path d="M1 5 Q5 0 9 5 Q5 9 1 5 Z" /></svg></button>
      <button class="eye" aria-label="Layer lock"><svg><use href="#open" /></svg></button>
      <div class="combo layer">
        <select aria-label="Layer"><option>•Layer 1</option></select>
        <svg viewBox="0 0 10 10"><path d="M1 3 L5 7 L9 3" /></svg>
      </div>
      <p class="message"><b>2</b> objects selected of type <b>Path</b> in layer <b>Layer 1</b>. Click selection to toggle scale/rotation handles.</p>
      <div class="coords"><span>X:</span><span class="mono">5.56</span><span>Y:</span><span class="mono">11.13</span></div>
      <label class="zlabel" for="zoom">Z:</label>
      <input id="zoom" class="zoom" type="text" value="140%">
      <span class="steps"><button aria-label="Zoom in"></button><button aria-label="Zoom out"></button></span>
    </footer>

    <section class="dialog" role="dialog" aria-label="Pattern along Path">
      <div class="dialog-title">
        <svg class="logo"><use href="#logo" /></svg>
        <span>Pattern along Path</span>
        <button aria-label="Close dialog"><svg viewBox="0 0 12 12"><path d="M1 1 L11 11 M11 1 L1 11" /></svg></button>
      </div>
      <div class="dialog-tabs">
        <button class="on">Options</button>
        <button>Help</button>
      </div>
      <div class="dialog-page">
        <div class="row">
          <label for="copies">Copies of the pattern:</label>
          <div class="combo">
            <select id="copies"><option>Repeated, stretched</option></select>
            <svg viewBox="0 0 10 10"><path d="M1 3 L5 7 L9 3" /></svg>
          </div>
        </div>
        <div class="row">
          <label for="deform">Deformation type:</label>
          <div class="combo">
            <select id="deform"><option>Snake</option></select>
            <svg viewBox="0 0 10 10"><path d="M1 3 L5 7 L9 3" /></svg>
          </div>
        </div>
        <div v-for="p in params" :key="p.id" class="row number">
          <label :for="p.id">{{ p.label }}</label>
          <div class="spin">
            <input :id="p.id" v-model="p.value" type="text">
            <span class="steps"><button aria-label="Increase"></button><button aria-label="Decrease"></button></span>
          </div>
        </div>
        <label class="check"><input v-model="vertical" type="checkbox">Pattern is vertical</label>
        <label class="check"><input v-model="duplicate" type="checkbox">Duplicate the pattern before deformation</label>
      </div>
      <div class="preview">
        <label class="check"><input v-model="live" type="checkbox">Live preview</label>
      </div>
      <div class="dialog-actions">
        <button><u>C</u>lose</button>
        <button class="primary"><u>A</u>pply</button>
      </div>
      <svg class="pointer" viewBox="0 0 12 18"><path d="M1 1 V14 L4 11 L7 17 L9 16 L6 10 H11 Z" /></svg>
    </section>
  </div>
</template>

<script setup>
import { ref, reactive } from 'vue'

const menus = [
  ['', 'F', 'ile'], ['', 'E', 'dit'], ['', 'V', 'iew'], ['', 'L', 'ayer'], ['', 'O', 'bject'],
  ['', 'P', 'ath'], ['', 'T', 'ext'], ['Filter', 's', ''], ['Exte', 'n', 'sions'], ['', 'H', 'elp']
]

const controlGroups = [
  ['all', 'layers', 'deselect'],
  ['ccw', 'cw', 'fliph', 'flipv'],
  ['bottom', 'lower', 'raise', 'top']
]

const fields = reactive([
  { label: 'X:', value: '0.693' },
  { label: 'Y:', value: '3.976' },
  { label: 'W:', value: '9.331' },
  { label: 'H:', value: '6.505' }
])

const tools = [
  'select', 'node', 'tweak', 'zoom', 'measure', 'rect', 'box', 'circle',
  'star', 'spiral', 'pencil', 'pen', 'calligraphy', 'text', 'spray'
]
const tool = ref('select')

const paints = ['none', 'flat', 'linear', 'radial', 'pattern', 'swatch', 'unset', 'unknown']

const sliders = reactive([
  { name: 'Blur', value: '0.0', full: false },
  { name: 'Opacity', value: '100.0', full: true }
])

const commands = [
  ['new', 'open', 'save', 'print'],
  ['import', 'export'],
  ['undo', 'redo'],
  ['dup', 'cut', 'paste'],
  ['zsel', 'zdraw', 'zpage'],
  ['copy', 'clone', 'unclone'],
  ['group', 'ungroup'],
  ['fill', 'text', 'layers']
]

const snap = (icon, on = false) => ({ icon, on })
const snaps = [
  [snap('snap', true)],
  [snap('snap'), snap('bbox'), snap('bcorner'), snap('bmid'), snap('bcenter')],
  [snap('snap', true), snap('path'), snap('inter'), snap('cusp', true), snap('smooth'), snap('mid')],
  [snap('snap', true), snap('object'), snap('rot'), snap('text')],
  [snap('page'), snap('grid', true), snap('guide', true)]
]

// 90px per inch, sixteen divisions each
const tickLength = n => (n % 16 === 0 ? 13 : n % 8 === 0 ? 6 : n % 2 === 0 ? 3 : 2)

const xTicks = []
for (let n = -5; n <= 160; n++) {
  const at = Math.round(30 + n * 5.625) + 0.5
  xTicks.push({ at, len: tickLength(n), label: n % 16 === 0 ? String(3 + n / 16) : '' })
}

const yTicks = []
for (let n = -2; n <= 98; n++) {
  const at = Math.round(12 + n * 5.615) + 0.5
  yTicks.push({ at, len: tickLength(n), label: n % 16 === 0 ? String(11 - n / 16) : '' })
}

const swatches = `
000000 1a1a1a 333333 4d4d4d 666666 808080 999999 b3b3b3 cccccc e6e6e6 ececec f2f2f2 f9f9f9 ffffff
800000 ff0000 808000 ffff00 008000 00ff00 008080 00ffff 000080 0000ff 800080 ff00ff
2b0000 550000 800000 aa0000 d40000 ff0000 ff2a2a ff5555 ff8080 ffaaaa ffd5d5
280b0b 501616 782121 a02c2c c83737 d35f5f de8787 e9afaf f4d7d7
241c1c 483737 6c5353 916f6f ac9393 c8b7b7 e3dbdb
2b1100 552200 803300 aa4400 d45500 ff6600 ff7f2a ff9955 ffb380 ffccaa ffe6d5
28170b 502d16 784421 a05a2c c87137 d38d5f deaa87 e9c6af f4e3d7
241f1c 483e37 6c5d53 917c6f ac9d93 c8beb7 e3dedb
2b2200 554400 806600 aa8800 d4aa00 ffcc00 ffd42a ffdd55 ffe680 ffeeaa fff6d5
28220b 504416 786721 a0892c c8ab37 d3bc5f decd87 e9ddaf f4eed7
24221c 484537 6c6753 918a6f aca793 c8c4b7 e3e2db
222b00 445500 668000 88aa00 aad400 ccff00 d4ff2a ddff55 e5ff80 eeffaa f6ffd5
22280b 445016 677821 89a02c abc837 bcd35f cdde87 dde9af eef4d7
22241c 454837 676c53 8a916f a7ac93 c4c8b7 e2e3db
112b00`.trim().split(/\s+/)

const params = reactive([
  { id: 'space', label: 'Space between copies:', value: '6.0' },
  { id: 'normal', label: 'Normal offset:', value: '0.0' },
  { id: 'tangential', label: 'Tangential offset:', value: '0.0' }
])
const vertical = ref(true)
const duplicate = ref(true)
const live = ref(false)
</script>

<style>
body { margin: 0; overflow: hidden; }
</style>

<style scoped>
* { box-sizing: border-box; }
.window {
  position: relative; display: flex; flex-direction: column; height: 100vh; overflow: hidden;
  font: 12px/16px Lato, "Open Sans", sans-serif; font-variant-ligatures: none; color: #333; background: #f0eef1;
  border: 1px solid #7a7a80; border-width: 1px 2px 1px 1px;
}
.defs { position: absolute; }
button, input, select { font: inherit; color: inherit; margin: 0; padding: 0; border: 0; background: none; border-radius: 0; outline: none; }
button { display: flex; align-items: center; justify-content: center; }
u { text-underline-offset: 2px; }

.titlebar { display: flex; align-items: center; height: 21px; background: #fff; color: #999; }
.logo { width: 16px; height: 16px; }
.title { flex: 1; margin-left: 2px; }
.window-buttons { display: flex; gap: 35px; padding-right: 14px; }
.window-buttons svg, .dialog-title button svg { width: 12px; height: 12px; fill: none; stroke: #999; }

.menubar { display: flex; gap: 8px; height: 21px; padding-left: 2px; background: #fff; }
.menubar button { display: block; }

.controls { display: flex; align-items: center; height: 32px; padding-bottom: 2px; background: #fff; border-bottom: 1px solid #e8e6ea; }
.control { width: 23px; height: 24px; }
.control svg { width: 20px; height: 20px; }
.vsep { width: 1px; height: 22px; margin: 0 2px; background: #ccc; }
.fields { display: flex; align-items: center; padding-left: 5px; }
.fields label { margin: 0 2px 0 5px; }
.spin { display: flex; height: 21px; border: 1px solid #aaa; background: #fff; }
.fields .spin { width: 49px; }
.spin input { flex: 1; min-width: 0; padding-left: 2px; }
.steps { display: flex; flex-direction: column; justify-content: space-between; width: 8px; background: #eee; padding: 2px 0; }
.steps button { height: 7px; }
.steps button::after { content: ""; border: 3px solid transparent; border-top: 0; border-bottom: 4px solid #111; }
.steps button:last-child::after { border-bottom: 0; border-top: 4px solid #111; }
.ratio { margin: 0 7px 0 6px; }
.ratio svg { width: 10px; height: 10px; }
.combo { position: relative; display: flex; height: 20px; border: 1px solid #aaa; background: #fff; }
.combo select { flex: 1; min-width: 0; appearance: none; padding-left: 1px; background: linear-gradient(#e4e2e4, #e4e2e4) right / 18px 100% no-repeat; }
.combo svg { position: absolute; right: 4px; top: 4px; width: 10px; height: 10px; pointer-events: none; }
.combo svg path { fill: none; stroke: #666; }
.unit { width: 40px; }
.unit select { background-size: 15px 100%; }
.unit svg { right: 2px; }
.affects { display: flex; margin-left: 3px; }
.affects button { width: 23px; height: 28px; background: #cde4fb; border-right: 1px solid #b5d2ef; }
.affects svg { width: 12px; height: 12px; }

.main { flex: 1; display: flex; min-height: 0; }
.toolbox { display: flex; flex-direction: column; width: 36px; padding-top: 1px; background: #fff; }
.toolbox button { height: 36px; width: 34px; }
.toolbox button.active { background: #cde4fb; }
.toolbox svg { width: 34px; height: 34px; }
.more { margin-top: auto; text-align: center; font-size: 10px; line-height: 20px; }

.editor { flex: 1; min-width: 0; display: grid; grid-template: 14px 1fr 18px / 14px 1fr 20px; background: #f0eef1; }
.editor > svg { width: 100%; height: 100%; }
.corner { display: flex; align-items: center; }
.corner svg { width: 10px; height: 10px; margin-left: 2px; }
.ruler-x { border-bottom: 1px solid #111; }
.ruler-y { border-right: 1px solid #111; }
.ruler-x path, .ruler-y path { stroke: #333; }
.ruler-x path.major, .ruler-y path.major { stroke: #888; }
.ruler-x .marker, .ruler-y .marker { fill: #111; stroke: none; }
.editor text { font: 9px "Liberation Sans", sans-serif; fill: #333; }
.canvas { background: #fff; }
.wound { fill: none; stroke: #e052c8; stroke-width: 9; }
.guide { fill: none; stroke: #e8a0dc; }
.bbox { fill: none; stroke: #888; stroke-dasharray: 3 2; }
.arrow { width: 15px; }
.arrow svg { width: 8px; height: 8px; fill: none; stroke: #777; }
.cms svg { fill: #777; }
.vscroll { display: flex; flex-direction: column; width: 15px; }
.vscroll button { height: 14px; }
.vscroll svg, .hscroll svg, .palette-scroll svg { width: 10px; height: 10px; fill: none; stroke: #444; stroke-width: 2; }
.track { flex: 1; display: flex; min-width: 0; min-height: 0; }
.vscroll .track { flex-direction: column; }
.vscroll .thumb { height: 17%; margin-top: 187px; background: #cfcccf; }
.hscroll { grid-column: 1 / 3; display: flex; padding-left: 14px; }
.hscroll button { width: 18px; }
.hscroll .thumb { width: 40%; margin-left: 398px; background: #cfcccf; }

.dock { width: 223px; border-left: 2px solid #333; border-top: 1px solid #333; background: #f0eef1; }
.dock-head { display: flex; align-items: center; height: 18px; border-bottom: 1px solid #aaa; }
.dock-head span { flex: 1; white-space: nowrap; }
.fill-icon { width: 9px; height: 12px; }
.dock-head button { width: 15px; height: 14px; }
.dock-head button svg { width: 8px; height: 8px; fill: none; stroke: #777; }
.lit { background: #dcebf8; }
.dock-tabs { display: flex; height: 24px; padding: 4px 3px 0; }
.dock-tabs button { gap: 2px; padding: 0 2px; border: 1px solid #e2e0e3; border-bottom: 0; white-space: nowrap; }
.dock-tabs .on { padding: 0 3px 0 2px; background: #fff; gap: 4px; }
.dock-tabs i { width: 6px; height: 6px; }
.ico-fill { background: #abb8ca; }
.ico-paint { border: 1px solid #bbb; }
.ico-style { border: 1px solid #666; border-width: 1px 0; }
.dock-page { height: 215px; margin: 0 4px 0 3px; padding: 6px 5px; background: #fff; color: #111; }
.paints { display: flex; height: 20px; margin-bottom: 7px; }
.paints button { width: 20px; }
.paints svg { width: 14px; height: 14px; }
.paints .active { background: #cde4fb; }
.paints .rule { width: 13px; }
.paints .rule svg { width: 12px; }
.grow { flex: 1; }
.slider { display: flex; height: 22px; margin: 3px 4px 4px 3px; }
.bar { flex: 1; display: flex; align-items: center; padding: 0 1px 0 3px; border: 1px solid #bbb; background: #fff; }
.bar input { flex: 1; min-width: 0; text-align: right; color: #222; }
.full .bar { background: #b9c3d1; border: 1px solid #444; }

.iconbar { display: flex; flex-direction: column; width: 26px; padding-top: 1px; background: #fff; }
.iconbar button { height: 23px; width: 100%; flex-shrink: 0; }
.iconbar svg { width: 20px; height: 20px; }
.iconbar .active { background: #cde4fb; }
.iconbar hr { width: 16px; height: 1px; margin: 3px auto; border: 0; background: #bbb; flex-shrink: 0; }
.commands { width: 28px; }
.snaps { width: 21px; }

.palette { display: flex; height: 10px; border-top: 1px solid #111; padding-right: 3px; }
.palette button { flex: 1; }
.nocolor svg { width: 9px; height: 9px; stroke: #802028; fill: none; }
.nocolor { background: #fff; }
.palette-scroll { display: flex; height: 12px; padding-top: 2px; }
.palette-scroll button { width: 14px; }
.palette-scroll button:last-child { width: 22px; }
.palette-scroll button:first-child svg { stroke: #bbb; }
.palette-scroll .thumb { width: 32%; background: #cfcccf; }

.status { display: flex; align-items: center; height: 26px; white-space: nowrap; }
.style-grid { align-self: flex-start; display: grid; grid-template-columns: 30px 9px auto; grid-auto-rows: 14px; width: 88px; line-height: 14px; font-size: 11px; color: #222; }
.style-grid i { padding-left: 11px; }
.stroke-value { display: flex; gap: 2px; }
.chip { width: 20px; height: 12px; background: #e052c8; }
.opacity { display: flex; align-items: center; height: 20px; }
.opacity input { width: 20px; height: 18px; background: #fff; }
.opacity .steps, .status > .steps { height: 18px; }
.eye { width: 12px; }
.eye svg { width: 9px; height: 9px; fill: #555; }
.layer { width: 70px; height: 26px; margin-right: 1px; }
.layer select { font-weight: bold; }
.layer svg { top: 8px; }
.message { flex: 1; min-width: 0; margin: 0; overflow: hidden; }
.message b { color: #111; }
.coords { align-self: flex-start; display: grid; grid-template-columns: auto 44px; grid-auto-rows: 13px; width: 60px; padding-left: 2px; border-left: 1px solid #bbb; line-height: 14px; }
.mono { font-family: "DejaVu Sans Mono", monospace; font-size: 11px; text-align: right; }
.zlabel { margin: 0 2px 0 8px; }
.zoom { width: 30px; height: 20px; padding-left: 1px; background: #fff; border: 1px solid #bbb; font-size: 11px; }

.dialog {
  position: absolute; left: 487px; top: 236px; width: 319px; padding-bottom: 4px;
  background: #f0eef1; border: 1px solid #8a8a90; box-shadow: 0 2px 10px rgba(0, 0, 0, .4);
}
.dialog-title { display: flex; align-items: center; height: 29px; padding: 0 10px 0 7px; background: #fff; gap: 3px; }
.dialog-title span { flex: 1; }
.dialog-tabs { display: flex; padding: 8px 0 0 6px; }
.dialog-tabs button { height: 23px; padding: 0 4px; }
.dialog-tabs .on { background: #fff; }
.dialog-page { margin: 0 6px 9px; padding: 6px 4px 3px; background: #fff; }
.row { display: flex; align-items: center; gap: 2px; margin-bottom: 3px; }
.row label { flex-shrink: 0; }
.row .combo { flex: 1; }
.number .spin { width: 67px; height: 22px; }
.number { justify-content: space-between; }
.check { display: flex; align-items: center; gap: 5px; height: 19px; }
.check input { appearance: none; width: 10px; height: 10px; margin-left: 2px; border: 1px solid #555; background: #fff; }
.check input:checked::after { content: ""; display: block; width: 5px; height: 2px; margin: 1px; border: 1px solid #444; border-width: 0 0 1px 1px; transform: rotate(-45deg); }
.preview { padding: 6px 6px 1px; border-top: 1px solid #aaa; }
.preview .check input { margin-left: 1px; }
.dialog-actions { display: flex; justify-content: flex-end; gap: 5px; padding: 5px 5px 0; border-top: 1px solid #e0dee1; }
.dialog-actions button { display: block; width: 56px; height: 23px; background: #e3e1e3; border: 1px solid #b5b3b5; }
.dialog-actions .primary { border: 2px solid #3a78b5; }
.pointer { position: absolute; left: 26px; top: 247px; width: 12px; height: 18px; fill: #fff; stroke: #444; }
</style>
